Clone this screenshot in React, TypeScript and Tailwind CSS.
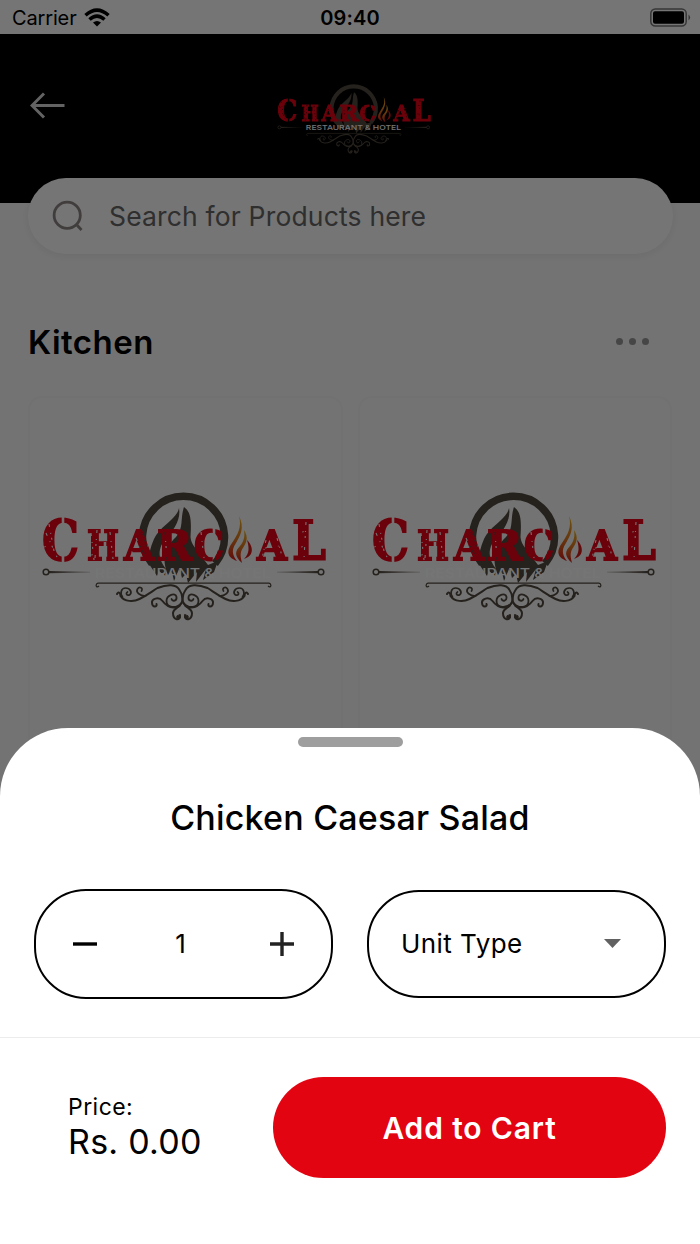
import { useId } from "react";
import { clsx } from "clsx";

interface LogoProps {
  className?: string;
}

interface Letter {
  char: string;
  x: number;
  width: number;
  size: number;
}

const LETTERS: Letter[] = [
  { char: "C", x: 2, width: 37, size: 56 },
  { char: "H", x: 47, width: 32, size: 41 },
  { char: "A", x: 84, width: 30, size: 41 },
  { char: "R", x: 117, width: 35, size: 41 },
  { char: "C", x: 154, width: 30, size: 41 },
  { char: "A", x: 217, width: 30, size: 41 },
  { char: "L", x: 252, width: 34, size: 55 },
];

const HalfOrnament = () => (
  <g fill="none" stroke="#51483f" strokeLinecap="round">
    <path
      strokeWidth="2"
      d="M-65.5 104 C-64 101 -62 103 -62 106 C-58 112 -49 112 -43 109 C-35 105 -30 101 -25 98 C-15 94 -6 94 -3 100 C0 104 0 107 0 109 C0 118 -9 117 -9.5 123 C-9.5 130 -2 132 -2.5 125"
    />
    <path strokeWidth="1.7" d="M-60 107 C-63 103 -61 98 -57 98 C-52 98 -50 103 -53 105 C-56 106 -57 103 -55 102" />
    <path strokeWidth="1.7" d="M-37 106 C-43 106 -47 102 -45 99 C-43 96 -39 98 -41 101" />
    <path strokeWidth="1.8" d="M-1 113 C-6 119 -16 118 -16 111 C-16 105 -7 102 -6 107 C-5.5 111 -10 112 -11 109" />
    <path strokeWidth="2" d="M-3 116 C-12 120 -17 115 -20 111 C-24 106 -31 109 -30.5 113 C-30 118 -25 117 -26 114" />
    <circle cx="-4" cy="127" r="1.8" fill="#51483f" />
  </g>
);

const Logo = ({ className }: LogoProps) => {
  const id = useId();

  return (
    <svg viewBox="0 0 288 135" className={clsx("shrink-0 overflow-visible", className)}>
      <defs>
        <mask id={`${id}-wear`} maskUnits="userSpaceOnUse" x="0" y="0" width="290" height="135">
          <rect width="290" height="135" fill="white" />
          <g stroke="black" fill="none">
            <path strokeWidth="2.6" d="M23 24 V36 M23 60 V75 M62 36 V48 M65 52 V73 M174 35 V49 M174 60 V73" />
            <path
              strokeWidth="1.1"
              strokeDasharray="3 6 1 4 2 9"
              d="M6 43 L17 67 M9 34 L14 61 M51 43 L54 70 M57 40 L55 68 M70 42 L73 69 M96 48 L107 70 M101 42 L111 65 M125 42 L127 70 M161 42 L164 68 M226 50 L222 69 M237 48 L243 70 M266 32 L264 69 M270 45 L274 68"
            />
            <path
              strokeWidth="0.8"
              strokeDasharray="2 11 1 7"
              d="M4 57 L20 53 M51 65 L79 61 M91 62 L113 64 M225 58 L246 55 M262 42 L273 40 M261 57 L276 54"
            />
          </g>
        </mask>
        <linearGradient id={`${id}-flame`} x1="0" y1="0" x2="0" y2="1">
          <stop offset="0" stopColor="#eeb320" />
          <stop offset="0.5" stopColor="#df7a20" />
          <stop offset="1" stopColor="#d51a18" />
        </linearGradient>
        <linearGradient id={`${id}-rod`} x1="0" y1="0" x2="1" y2="0">
          <stop offset="0" stopColor="#51483f" />
          <stop offset="1" stopColor="#51483f" stopOpacity="0.3" />
        </linearGradient>
      </defs>

      {/* ring and charcoal flame */}
      <path d="M112 73.5 A41 41 0 1 1 175 73.5" fill="none" stroke="#51483f" strokeWidth="7.5" />
      <path
        fill="#51483f"
        d="M139 18 C137 29 121 35 114 49 C110 58 108 68 109 74 L117 86 L119 81 L125 86 L126 79 C116 66 119 56 127 47 C135 39 141 28 139 18 Z"
      />
      <path
        fill="#51483f"
        d="M144 17 C151 22 151.5 30 150.5 47 C151 56 158 59 162 67 L168 75 L178 71 L174 82 L163 90 L166 79 L156 92 L157 82 L148 93 L146 84 L142 88 L139 79 L134 91 L132 82 L128 85 C120 66 127 56 136 47 C144 38 140 28 144 17 Z"
      />

      <g
        mask={`url(#${id}-wear)`}
        fill="#e90417"
        stroke="#e90417"
        strokeWidth="1.8"
        fontFamily="DejaVu Serif"
        fontWeight="700"
      >
        {LETTERS.map(({ char, x, width, size }, i) => (
          <text key={i} x={x} y="69.7" fontSize={size} textLength={width} lengthAdjust="spacingAndGlyphs">
            {char}
          </text>
        ))}
      </g>

      {/* flame in place of the O */}
      <g fill={`url(#${id}-flame)`}>
        <path d="M199 26 C205 38 200 46 196 53 C190 61 194 67 197 71 C186 67 187 60 192 53 C198 44 202 37 199 26 Z" />
        <path d="M204 40 C209 48 206 53 203.5 57 C199 63 201 68 202 73 C194 66 195 61 200 56 C204 51 205 47 204 40 Z" />
        <path fill="#d51a18" d="M207 50 C214 57 214 66 204 69 C210 63 209 57 207 50 Z" />
      </g>

      <text
        x="55"
        y="87.5"
        fontFamily="Inter"
        fontSize="12.5"
        fontWeight="500"
        fill="#ffffff"
        textLength="176"
        lengthAdjust="spacingAndGlyphs"
      >
        RESTAURANT &amp; HOTEL
      </text>

      {/* side rods */}
      {["", "translate(287 0) scale(-1 1)"].map((transform) => (
        <g key={transform} transform={transform}>
          <circle cx="6" cy="82" r="2.8" fill="none" stroke="#51483f" strokeWidth="1.5" />
          <path d="M9 80.9 L50 81.7 L50 82.5 L9 83.2 Z" fill={`url(#${id}-rod)`} />
        </g>
      ))}

      <path
        d="M59 96 C56 99 55 94 58 93.2 H229 C232 94 231 99 228 96"
        fill="none"
        stroke="#51483f"
        strokeWidth="1.2"
      />
      <g transform="translate(142.5 0)">
        <HalfOrnament />
        <g transform="scale(-1 1)">
          <HalfOrnament />
        </g>
      </g>
    </svg>
  );
};

const StatusBar = () => (
  <div className="flex h-[34px] items-center bg-white text-xl text-black">
    <div className="flex flex-1 items-center gap-[7px] pl-3">
      <span className="pt-0.5 tracking-[-0.15px]">Carrier</span>
      <svg viewBox="0 0 26 19" className="h-[19px] w-[26px]">
        <g fill="none" stroke="currentColor" strokeWidth="3.5">
          <path d="M1.5 7.2 Q13 -3 24.5 7.2" />
          <path d="M5.5 11.5 Q13 4.8 20.5 11.5" />
        </g>
        <path d="M9 14.5 Q13 11.3 17 14.5 L13 18.5 Z" fill="currentColor" />
      </svg>
    </div>
    <span className="pt-0.5 pr-[3px] font-semibold tracking-[0.1px]">09:40</span>
    <div className="flex flex-1 justify-end pr-[9px]">
      <svg viewBox="0 0 41 19" className="h-[19px] w-[41px]">
        <rect x="0.8" y="1" width="35.4" height="17" rx="4.5" fill="none" stroke="#777" strokeWidth="1.5" />
        <rect x="3" y="3.3" width="31" height="12.5" rx="2" fill="currentColor" />
        <path d="M38.5 6.5 Q41.8 9.5 38.5 12.5 Z" fill="#777" />
      </svg>
    </div>
  </div>
);

const SearchBar = () => (
  <div className="mx-7 -mt-[25px] flex h-[76px] w-[645px] items-center rounded-full bg-white pl-6 shadow-[0_2px_8px_rgba(0,0,0,0.07)]">
    <svg viewBox="0 0 32 32" className="size-8 text-[#8c8584]" fill="none" stroke="currentColor" strokeWidth="2.8">
      <circle cx="15.2" cy="15.2" r="13.1" />
      <path d="M24 24 L29.5 30" />
    </svg>
    <span className="pt-0.5 pl-[25px] text-[26.5px] tracking-[0.17px] text-[#666]">Search for Products here</span>
  </div>
);

const ProductCard = () => (
  <div className="h-[400px] w-[315px] rounded-[14px] border-2 border-[#f6f6f6] bg-[#fbfbfb]">
    <Logo className="mt-[92px] ml-[10px] h-[135px] w-[288px]" />
  </div>
);

const ItemSheet = () => (
  <div className="absolute inset-x-0 bottom-0 flex h-[516px] flex-col rounded-t-[68px] bg-white text-black">
    <div className="mx-auto mt-[9px] h-2.5 w-[105px] shrink-0 rounded-full bg-[#9e9e9e]" />
    <h2 className="mt-[46px] text-center text-[34px] leading-[50px] font-medium tracking-[0.2px]">
      Chicken Caesar Salad
    </h2>

    <div className="mt-[46px] flex items-center justify-between px-[34px]">
      <div className="flex h-[110px] w-[299px] items-center justify-between rounded-[52px] border-2 border-black px-[37px]">
        <svg viewBox="0 0 24 24" className="size-6" stroke="currentColor" strokeWidth="3.4">
          <path d="M0 12 H24" />
        </svg>
        <span className="pr-1.5 pb-0.5 text-[26px]">1</span>
        <svg viewBox="0 0 24 24" className="size-6 text-[#222]" stroke="currentColor" strokeWidth="3.4">
          <path d="M0 12 H24 M12 0 V24" />
        </svg>
      </div>
      <div className="flex h-[108px] w-[299px] items-center justify-between rounded-[52px] border-2 border-black pr-[43px] pl-8">
        <span className="pb-0.5 text-[26px] tracking-[0.45px]">Unit Type</span>
        <svg viewBox="0 0 17 9" className="mb-0.5 h-[9px] w-[17px]">
          <path d="M0 0 H17 L8.5 9 Z" fill="#616161" />
        </svg>
      </div>
    </div>

    <div className="mt-[38px] flex justify-between border-t border-[#ececec] pt-[39px] pr-[34px] pl-[68px]">
      <div className="pt-4">
        <p className="text-[23px] leading-7 tracking-[0.45px]">Price:</p>
        <p className="text-[34px] leading-[42px] tracking-[0.25px]">Rs. 0.00</p>
      </div>
      <button className="h-[101px] w-[393px] rounded-full bg-[#e30411] pt-0.5 text-[30px] font-semibold tracking-[0.85px] text-white">
        Add to Cart
      </button>
    </div>
  </div>
);

const App = () => {
  return (
    <div
      className={clsx(
        "relative h-[1244px] w-[700px] overflow-hidden bg-[#fbfbfb]",
        "font-['Inter','Liberation_Sans',sans-serif]"
      )}
    >
      <StatusBar />
      <header className="flex h-[169px] items-start bg-black pt-[49px]">
        <div className="flex w-[276px] pt-[9px] pl-[30px]">
          <svg viewBox="0 0 35 27" className="h-[27px] w-[35px] text-[#d8d8d8]" fill="none" stroke="currentColor" strokeWidth="3">
            <path d="M14 1.5 L2 13.5 L14 25.5 M2 13.5 H34.5" />
          </svg>
        </div>
        <Logo className="h-[73px] w-[156px]" />
      </header>
      <SearchBar />
      <main className="px-7 pt-[63px]">
        <div className="flex h-12 items-center justify-between pr-[23px]">
          <h1 className="pt-[3px] text-[33px] font-semibold tracking-[0.45px] text-black">Kitchen</h1>
          <div className="flex gap-[6px]">
            {[0, 1, 2].map((dot) => (
              <span key={dot} className="size-[7px] rounded-full bg-[#9a9a9a]" />
            ))}
          </div>
        </div>
        <div className="flex gap-[15px] pt-[31px]">
          <ProductCard />
          <ProductCard />
        </div>
      </main>
      <div className="absolute inset-0 bg-black/54" />
      <ItemSheet />
    </div>
  );
};

export default App;
